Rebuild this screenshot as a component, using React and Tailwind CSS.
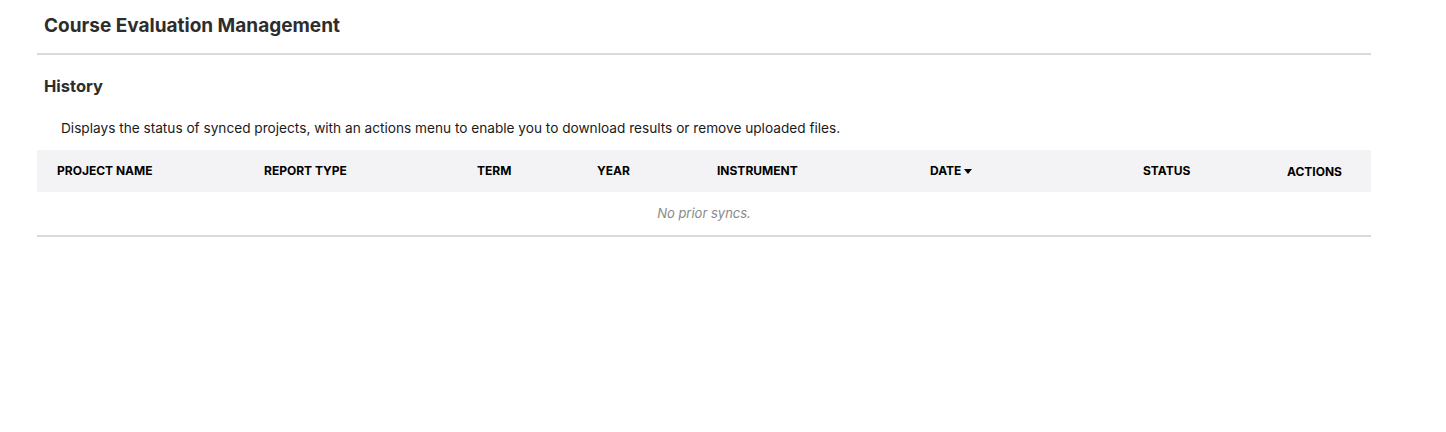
import React from 'react';

const columns = [
  { label: 'PROJECT NAME', width: 'w-[207px]' },
  { label: 'REPORT TYPE', width: 'w-[213px]' },
  { label: 'TERM', width: 'w-[120px]' },
  { label: 'YEAR', width: 'w-[120px]' },
  { label: 'INSTRUMENT', width: 'w-[213px]' },
  { label: 'DATE', width: 'w-[213px]', sorted: true },
  { label: 'STATUS', width: 'w-[144px]' },
  { label: 'ACTIONS', width: 'w-[104px]', low: true },
];

const App = () => {
  return (
    <div className="min-h-[432px] bg-white font-['Inter','Liberation_Sans',sans-serif] text-[#2d2d2d]">
      <div className="w-[1334px] ml-[37px]">
        <div className="pt-[14px] pb-[16px] pl-[7px] border-b-2 border-[#d9d9d9]">
          <h1 className="text-[19px] leading-[23px] font-bold">Course Evaluation Management</h1>
        </div>

        <h2 className="mt-[21px] pl-[7px] text-[16.5px] leading-[20px] font-bold">History</h2>
        <p className="mt-[24px] pl-[24px] text-[13.65px] leading-[16px] text-[#1a1a1a]">
          Displays the status of synced projects, with an actions menu to enable you to download results or remove uploaded files.
        </p>

        <div className="mt-[14px] border-b-2 border-[#d9d9d9]">
          <div className="flex h-[42px] items-center bg-[#f3f3f5]">
            {columns.map((col) => (
              <div
                key={col.label}
                className={`${col.width} pl-[20px] flex items-center text-[12px] font-bold text-black ${col.low ? 'pt-[2px]' : ''}`}
              >
                {col.label}
                {col.sorted && (
                  <svg className="ml-[3px]" width="8" height="5" viewBox="0 0 8 5">
                    <path d="M0 0 L8 0 L4 5 Z" fill="#000" />
                  </svg>
                )}
              </div>
            ))}
          </div>
          <div className="h-[43px] flex items-center justify-center text-[13px] italic text-[#8a8a8a]">
            No prior syncs.
          </div>
        </div>
      </div>
    </div>
  );
};

export default App;
